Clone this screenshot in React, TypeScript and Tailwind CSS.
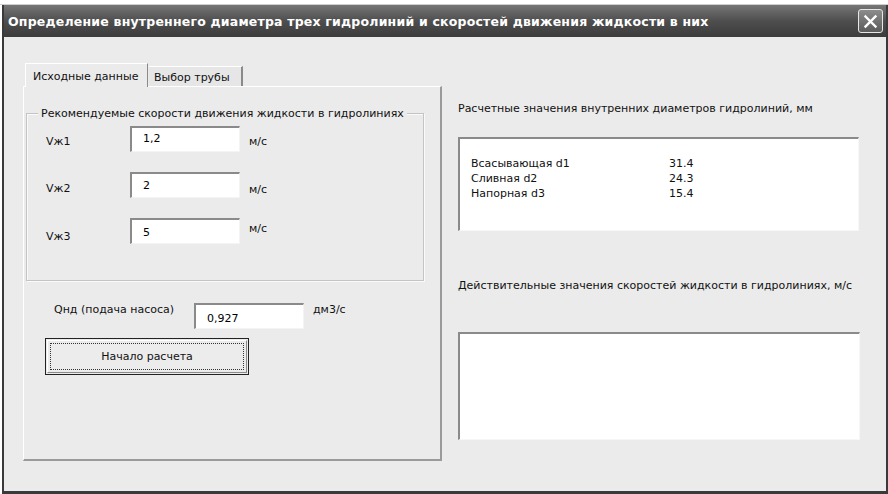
import React from 'react';

const ui = { fontFamily: '"DejaVu Sans", Tahoma, sans-serif' };

function Field({ value, className = '' }: { value: string; className?: string }) {
  return (
    <div
      className={`w-[110px] h-[26px] bg-white border-t-2 border-l-2 border-b border-r border-t-[#8a8a8a] border-l-[#8a8a8a] border-b-[#f4f4f4] border-r-[#f4f4f4] pl-[11px] text-black ${className}`}
    >
      {value}
    </div>
  );
}

function SpeedRow({
  label,
  value,
  labelTop,
  unitTop,
  valueTop,
  className = '',
}: {
  label: string;
  value: string;
  labelTop: string;
  unitTop: string;
  valueTop: string;
  className?: string;
}) {
  return (
    <div className={`flex items-start ${className}`}>
      <div className={`w-[84px] ${labelTop}`}>{label}</div>
      <Field value={value} className={valueTop} />
      <div className={`ml-[9px] ${unitTop}`}>м/с</div>
    </div>
  );
}

function ResultBox({ children, className = '' }: { children?: React.ReactNode; className?: string }) {
  return (
    <div
      className={`bg-white border-t-2 border-l-2 border-b border-r border-t-[#8a8a8a] border-l-[#8a8a8a] border-b-[#f7f7f7] border-r-[#f7f7f7] ${className}`}
    >
      {children}
    </div>
  );
}

export default function App() {
  return (
    <div className="w-[888px] h-[494px] bg-white overflow-hidden text-[11px] leading-[13px] text-[#111]" style={ui}>
      <div className="h-[5px] border-b border-[#cfcfcf] bg-white" />
      <div className="flex flex-col h-[489px] ml-[2px] border-l-2 border-r-2 border-[#3a3a3a]">
        {/* title bar */}
        <div className="h-[32px] shrink-0 flex items-center justify-between pl-[4px] pr-[3px] bg-gradient-to-b from-[#767676] via-[#4e4e4e] to-[#3c3c3c]">
          <span className="text-white font-bold text-[12.5px] tracking-[0.2px]" style={{ fontFamily: '"DejaVu Sans", sans-serif' }}>
            Определение внутреннего диаметра трех гидролиний и скоростей движения жидкости в них
          </span>
          <div className="w-[25px] h-[24px] rounded-[3px] border border-[#e6e6e6] bg-gradient-to-b from-[#8c8c8c] to-[#5c5c5c] flex items-center justify-center">
            <svg width="15" height="15" viewBox="0 0 15 15">
              <path d="M2.5 2.5 L12.5 12.5 M12.5 2.5 L2.5 12.5" stroke="#fff" strokeWidth="2.4" strokeLinecap="square" />
            </svg>
          </div>
        </div>

        {/* client area */}
        <div className="flex-1 flex bg-[#ebebeb] border-b-[3px] border-[#3a3a3a]">
          {/* left: tab control */}
          <div className="pl-[19px] pt-[26px] w-[438px] shrink-0">
            <div className="flex items-end h-[23px] pl-[2px]">
              <div className="h-[24px] w-[123px] pl-[7px] pt-[6px] bg-[#ebebeb] border-t border-l border-r border-t-white border-l-white border-r-[#8a8a8a] relative z-10 -mb-[1px]">
                Исходные данные
              </div>
              <div className="h-[20px] w-[94px] pl-[5px] pt-[4px] bg-[#e6e6e6] border-t border-r-2 border-t-white border-r-[#8a8a8a] ml-[1px]">
                Выбор трубы
              </div>
            </div>
            <div className="w-[419px] h-[375px] border-t border-l border-t-white border-l-white border-r-2 border-b-2 border-r-[#9a9a9a] border-b-[#9a9a9a] pt-[26px] pl-[2px]">
              {/* group box */}
              <div className="relative w-[398px] h-[168px] border border-[#c4c4c4] shadow-[inset_1px_1px_0_#fafafa,1px_1px_0_#fafafa]">
                <div className="absolute -top-[7px] left-[11px] px-[3px] bg-[#ebebeb]">
                  Рекомендуемые скорости движения жидкости в гидролиниях
                </div>
                <div className="pt-[12px] pl-[19px] flex flex-col">
                  <SpeedRow label="Vж1" value="1,2" labelTop="mt-[9px]" unitTop="mt-[9px]" valueTop="pt-[4px]" />
                  <SpeedRow label="Vж2" value="2" labelTop="mt-[10px]" unitTop="mt-[11px]" valueTop="pt-[5px]" className="mt-[20px]" />
                  <SpeedRow label="Vж3" value="5" labelTop="mt-[12px]" unitTop="mt-[4px]" valueTop="pt-[6px]" className="mt-[20px]" />
                </div>
              </div>

              <div className="flex items-start mt-[22px] pl-[28px]">
                <div className="w-[140px]">Qнд (подача насоса)</div>
                <Field value="0,927" className="pt-[7px]" />
                <div className="ml-[9px]">дм3/с</div>
              </div>

              <div className="ml-[19px] mt-[9px] w-[204px] h-[37px] border border-[#222] bg-[#ececec] p-[1px]">
                <div className="h-full border border-t-white border-l-white border-r-[#8a8a8a] border-b-[#8a8a8a] p-[2px]">
                  <div className="h-full border border-dotted border-[#333] flex items-center justify-center">
                    Начало расчета
                  </div>
                </div>
              </div>
            </div>
          </div>

          {/* right: results */}
          <div className="pl-[16px] pt-[65px] flex flex-col">
            <div>Расчетные значения внутренних диаметров гидролиний, мм</div>
            <ResultBox className="mt-[22px] w-[401px] h-[94px] pt-[17px] pl-[11px] leading-[15px]">
              <div className="flex">
                <span className="w-[198px]">Всасывающая d1</span>
                <span>31.4</span>
              </div>
              <div className="flex">
                <span className="w-[198px]">Сливная d2</span>
                <span>24.3</span>
              </div>
              <div className="flex">
                <span className="w-[198px]">Напорная d3</span>
                <span>15.4</span>
              </div>
            </ResultBox>
            <div className="mt-[48px]">Действительные значения скоростей жидкости в гидролиниях, м/с</div>
            <ResultBox className="mt-[40px] w-[402px] h-[108px]" />
          </div>
        </div>
      </div>
    </div>
  );
}
